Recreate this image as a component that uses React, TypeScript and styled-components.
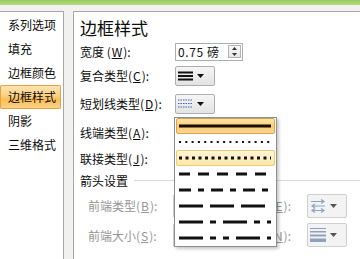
import React from 'react';
import styled, { createGlobalStyle } from 'styled-components';

const Global = createGlobalStyle`
  html, body { margin: 0; padding: 0; background: #efefef; }
  body { font-family: "Noto Sans CJK SC", "Liberation Sans", sans-serif; }
`;

const Frame = styled.div`
  width: 360px;
  height: 259px;
  overflow: hidden;
  display: flex;
  flex-direction: column;
  background: #f1f1f0;
`;

const TopBar = styled.div`
  height: 5px;
  flex: none;
  background: linear-gradient(#98cc5c, #b2da82);
  margin-bottom: 6px;
`;

const Body = styled.div`
  flex: 1;
  display: flex;
  gap: 9px;
  min-height: 0;
`;

const Nav = styled.div`
  width: 63px;
  flex: none;
  background: #fff;
  border-top: 1px solid #a8a8a8;
  border-right: 1px solid #a8a8a8;
  padding-top: 1px;
  display: flex;
  flex-direction: column;
`;

const NavItem = styled.div<{ $active?: boolean }>`
  height: 24px;
  line-height: 24px;
  font-size: 12px;
  color: #0c0c0c;
  padding-left: 8px;
  margin-right: 2px;
  border-radius: 2px;
  white-space: nowrap;
  background: ${(p) =>
    p.$active
      ? 'linear-gradient(#fde6b4 0%, #fccf83 45%, #fbbd54 60%, #fdd48c 100%)'
      : 'transparent'};
  box-shadow: ${(p) => (p.$active ? 'inset 0 0 0 1px #dfa449' : 'none')};
`;

const Panel = styled.div`
  flex: 1;
  background: #fff;
  border-top: 1px solid #a8a8a8;
  border-left: 1px solid #a8a8a8;
  padding-left: 6px;
  display: flex;
  flex-direction: column;
`;

const Title = styled.div`
  height: 28px;
  box-sizing: border-box;
  padding-top: 3px;
  display: flex;
  align-items: center;
  font-size: 17px;
  color: #0c0c0c;
`;

const Row = styled.div<{ $h: number; $indent?: boolean }>`
  height: ${(p) => p.$h}px;
  flex: none;
  display: flex;
  align-items: center;
  padding-left: ${(p) => (p.$indent ? 8 : 0)}px;
`;

const Label = styled.div<{ $w: number; $disabled?: boolean; $right?: boolean }>`
  width: ${(p) => p.$w}px;
  flex: none;
  font-size: 12px;
  white-space: nowrap;
  color: ${(p) => (p.$disabled ? '#959595' : '#0c0c0c')};
  text-align: ${(p) => (p.$right ? 'right' : 'left')};
  padding-right: ${(p) => (p.$right ? 16 : 0)}px;
  box-sizing: border-box;
`;

const Key = styled.span`
  text-decoration: underline;
  margin: 0 1px;
`;

const Section = styled.div`
  height: 20px;
  flex: none;
  display: flex;
  align-items: center;
  gap: 6px;
  font-size: 12px;
  color: #0c0c0c;
  &::after {
    content: '';
    flex: 1;
    height: 1px;
    background: #d9d9d9;
  }
`;

const Spin = styled.div`
  width: 68px;
  height: 18px;
  box-sizing: border-box;
  border: 1px solid #a9aeb6;
  background: #fff;
  display: flex;
  align-items: center;
  justify-content: space-between;
  padding: 0 1px 0 2px;
  font-size: 12px;
  letter-spacing: 0.6px;
  color: #111;
`;

const SpinBtn = styled.div`
  width: 13px;
  height: 13px;
  box-sizing: border-box;
  border: 1px solid #b4b4b4;
  background: linear-gradient(#fafafa, #e6e6e6);
  display: flex;
  flex-direction: column;
  align-items: center;
  justify-content: space-around;
`;

const DropWrap = styled.div`
  position: relative;
  flex: none;
`;

const DropBtn = styled.div<{ $h?: number; $disabled?: boolean }>`
  width: 40px;
  height: ${(p) => p.$h ?? 20}px;
  box-sizing: border-box;
  border: 1px solid ${(p) => (p.$disabled ? '#cfcfcf' : '#aeaeae')};
  border-radius: 2px;
  background: ${(p) =>
    p.$disabled ? '#f3f3f3' : 'linear-gradient(#f5f5f5, #e3e3e3)'};
  display: flex;
  align-items: center;
  padding-left: 2px;
  gap: 4px;
`;

const Menu = styled.div`
  position: absolute;
  left: -1px;
  top: calc(100% + 3px);
  width: 103px;
  box-sizing: border-box;
  background: #fff;
  border: 1px solid #8e8e8e;
  box-shadow: 2px 2px 3px rgba(0, 0, 0, 0.22);
  display: flex;
  flex-direction: column;
  z-index: 5;
`;

const MenuItem = styled.div<{ $state?: 'hover' | 'selected' }>`
  height: 16px;
  box-sizing: border-box;
  margin: 0 1px;
  padding-left: 1px;
  display: flex;
  align-items: center;
  border-radius: 2px;
  border: 1px solid
    ${(p) =>
      p.$state === 'hover' ? '#d9a24a' : p.$state === 'selected' ? '#efca78' : 'transparent'};
  background: ${(p) =>
    p.$state === 'hover'
      ? 'linear-gradient(#fde4ad, #fbcb70 55%, #fcd893)'
      : p.$state === 'selected'
      ? 'linear-gradient(#fff6d8, #fde8aa)'
      : 'transparent'};
`;

const Tri = ({ c = '#111' }: { c?: string }) => (
  <svg width="7" height="4" viewBox="0 0 7 4">
    <path d="M0 0H7L3.5 4Z" fill={c} />
  </svg>
);

const CompoundIcon = () => (
  <svg width="15" height="12" viewBox="0 0 15 12">
    <rect x="0" y="1.5" width="15" height="2" fill="#111" />
    <rect x="0" y="5" width="15" height="2" fill="#111" />
    <rect x="0" y="8.5" width="15" height="2" fill="#111" />
  </svg>
);

const DashIcon = () => (
  <svg width="15" height="12" viewBox="0 0 15 12">
    {[2, 5.5, 9].map((y) => (
      <line key={y} x1="0" y1={y} x2="15" y2={y} stroke="#3f63b5" strokeWidth="1" strokeDasharray="1.5 1" />
    ))}
  </svg>
);

const ArrowsIcon = () => (
  <svg width="16" height="16" viewBox="0 0 16 16" fill="none" stroke="#8fa5c6" strokeWidth="1.2">
    <path d="M1 3.5H14M11 1.5L14 3.5L11 5.5" />
    <path d="M15 8H2M5 6L2 8L5 10" />
    <path d="M2 12.5H14M5 10.5L2 12.5L5 14.5M11 10.5L14 12.5L11 14.5" />
  </svg>
);

const WeightIcon = () => (
  <svg width="16" height="16" viewBox="0 0 16 16">
    <rect x="0" y="1" width="16" height="1" fill="#8fa0bd" />
    <rect x="0" y="4" width="16" height="1.5" fill="#8fa0bd" />
    <rect x="0" y="7.5" width="16" height="2" fill="#8fa0bd" />
    <rect x="0" y="11.5" width="16" height="3.5" fill="#8fa0bd" />
  </svg>
);

type Dash = { w: number; dash?: string };
const dashes: Dash[] = [
  { w: 3 },
  { w: 2, dash: '2 4.3' },
  { w: 3, dash: '3 3.5' },
  { w: 3, dash: '11 8' },
  { w: 3, dash: '12 7 6 7' },
  { w: 3, dash: '24 7' },
  { w: 3, dash: '24 7 6 7' },
  { w: 3, dash: '24 7 6 7 6 7' },
];

const DashLine = ({ d }: { d: Dash }) => (
  <svg width="94" height="14" viewBox="0 0 94 14">
    <line x1="1" y1="7" x2="93" y2="7" stroke={!d.dash ? '#1b0c00' : '#111'} strokeWidth={d.w} strokeDasharray={d.dash} />
  </svg>
);

export default function App() {
  return (
    <Frame>
      <Global />
      <TopBar />
      <Body>
        <Nav>
          <NavItem>系列选项</NavItem>
          <NavItem>填充</NavItem>
          <NavItem>边框颜色</NavItem>
          <NavItem $active>边框样式</NavItem>
          <NavItem>阴影</NavItem>
          <NavItem>三维格式</NavItem>
        </Nav>
        <Panel>
          <Title>边框样式</Title>
          <Row $h={23}>
            <Label $w={95}>
              宽度 (<Key>W</Key>):
            </Label>
            <Spin>
              <span>0.75 磅</span>
              <SpinBtn>
                <svg width="5" height="3" viewBox="0 0 5 3"><path d="M0 3H5L2.5 0Z" fill="#333" /></svg>
                <svg width="5" height="3" viewBox="0 0 5 3"><path d="M0 0H5L2.5 3Z" fill="#333" /></svg>
              </SpinBtn>
            </Spin>
          </Row>
          <Row $h={25}>
            <Label $w={95}>
              复合类型(<Key>C</Key>):
            </Label>
            <DropBtn>
              <CompoundIcon />
              <Tri />
            </DropBtn>
          </Row>
          <Row $h={31}>
            <Label $w={95}>
              短划线类型(<Key>D</Key>):
            </Label>
            <DropWrap>
              <DropBtn>
                <DashIcon />
                <Tri />
              </DropBtn>
              <Menu>
                {dashes.map((d, i) => (
                  <MenuItem key={i} $state={i === 0 ? 'hover' : i === 2 ? 'selected' : undefined}>
                    <DashLine d={d} />
                  </MenuItem>
                ))}
              </Menu>
            </DropWrap>
          </Row>
          <Row $h={27}>
            <Label $w={95}>
              线端类型(<Key>A</Key>):
            </Label>
          </Row>
          <Row $h={24}>
            <Label $w={95}>
              联接类型(<Key>J</Key>):
            </Label>
          </Row>
          <Section>箭头设置</Section>
          <Row $h={31} $indent>
            <Label $w={85} $disabled>
              前端类型(<Key>B</Key>):
            </Label>
            <DropBtn $h={24} $disabled />
            <Label $w={94} $disabled $right>
              末端类型(<Key>E</Key>):
            </Label>
            <DropBtn $h={24} $disabled>
              <ArrowsIcon />
              <Tri c="#555" />
            </DropBtn>
          </Row>
          <Row $h={28} $indent>
            <Label $w={85} $disabled>
              前端大小(<Key>S</Key>):
            </Label>
            <DropBtn $h={24} $disabled />
            <Label $w={94} $disabled $right>
              末端大小(<Key>N</Key>):
            </Label>
            <DropBtn $h={24} $disabled>
              <WeightIcon />
              <Tri c="#555" />
            </DropBtn>
          </Row>
        </Panel>
      </Body>
    </Frame>
  );
}
